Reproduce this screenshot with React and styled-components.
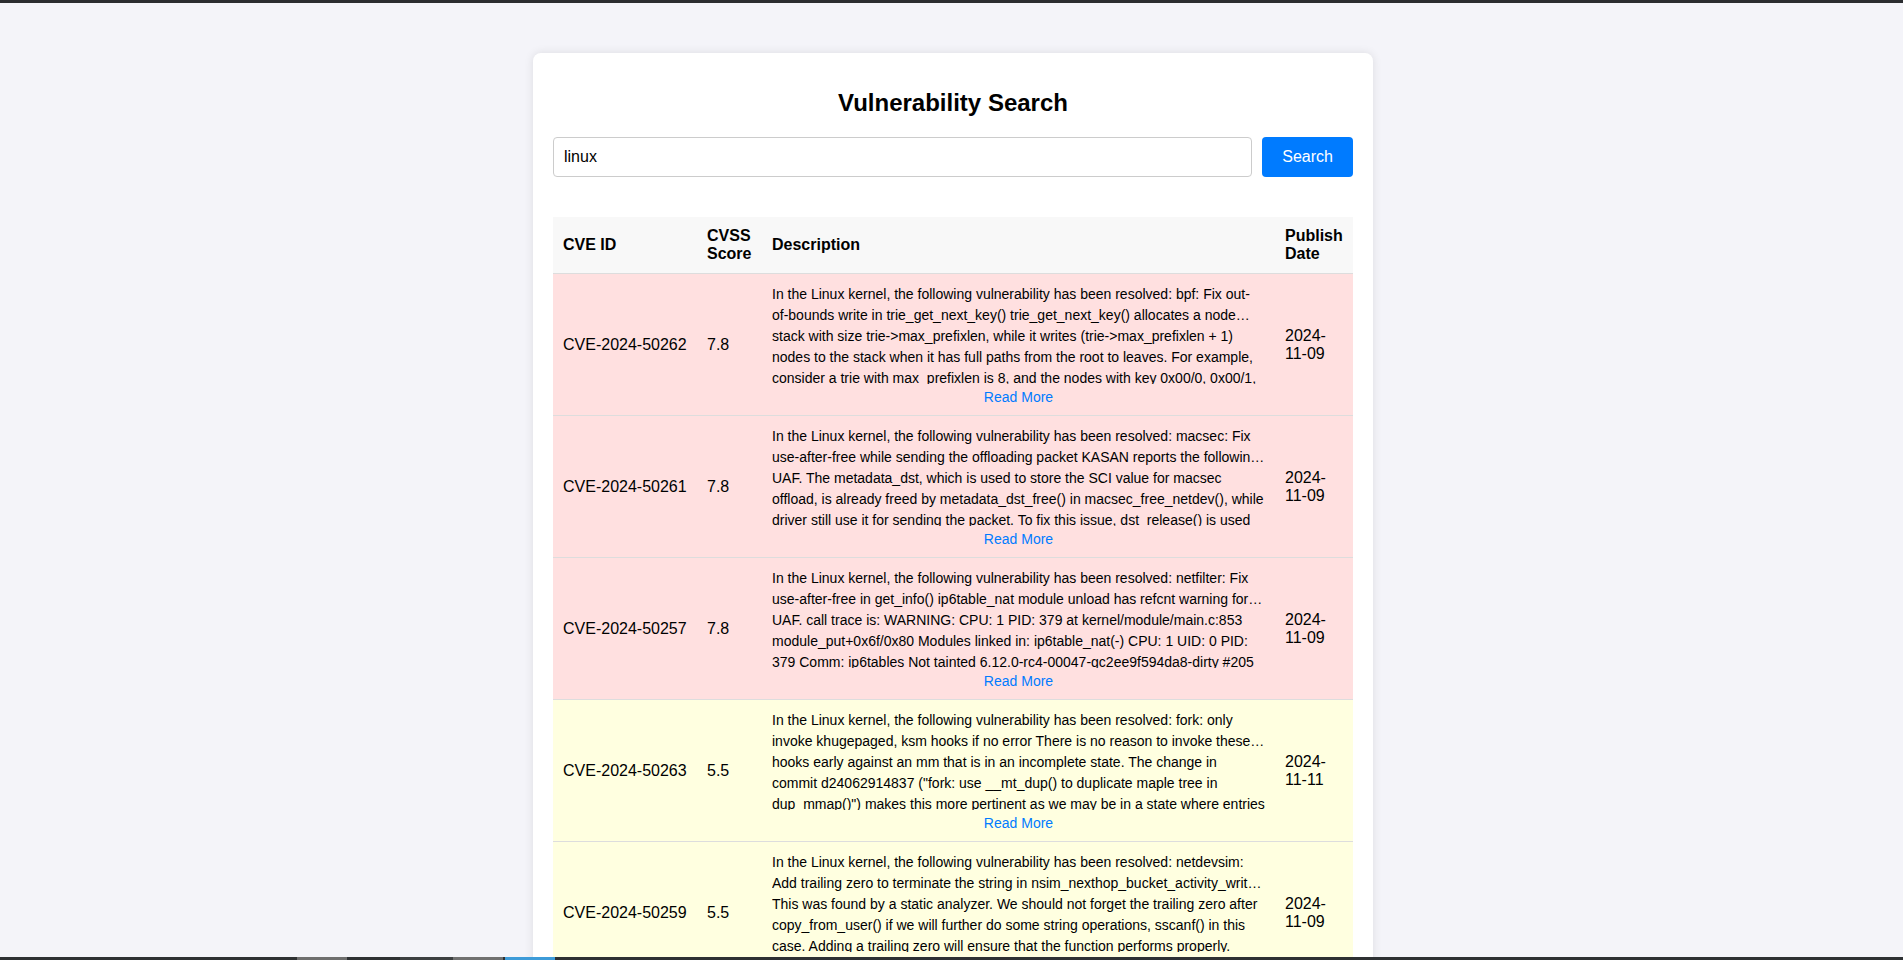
import React, { useState } from "react";
import styled, { createGlobalStyle } from "styled-components";

const GlobalStyle = createGlobalStyle`
  html, body {
    margin: 0;
    padding: 0;
    background: #f4f4f9;
    font-family: "Liberation Sans", Arial, sans-serif;
    color: #000;
    scrollbar-width: none;
  }
  html::-webkit-scrollbar, body::-webkit-scrollbar { display: none; }
`;

const TopBar = styled.div`
  position: fixed;
  top: 0;
  left: 0;
  right: 0;
  height: 3px;
  background: #2b2d30;
  z-index: 10;
`;

const BottomBar = styled.div`
  position: fixed;
  bottom: 0;
  left: 0;
  right: 0;
  height: 3px;
  background: #2e3133;
  display: flex;
  z-index: 10;
`;

const BarSegment = styled.div`
  width: ${(p) => p.$w}px;
  flex: none;
  background: ${(p) => p.$c};
`;

const Page = styled.div`
  padding: 53px 0 40px 3px;
`;

const Card = styled.main`
  width: 840px;
  box-sizing: border-box;
  margin: 0 auto;
  background: #fff;
  padding: 20px;
  border-radius: 8px;
  box-shadow: 0 0 10px rgba(0, 0, 0, 0.1);
`;

const Title = styled.h1`
  font-size: 24px;
  font-weight: bold;
  text-align: center;
  margin: 16px 0 20px;
  line-height: normal;
`;

const SearchRow = styled.form`
  display: flex;
  gap: 10px;
  margin: 0 0 40px;
`;

const SearchInput = styled.input`
  flex: 1;
  padding: 10px;
  font-size: 16px;
  font-family: inherit;
  border: 1px solid #ccc;
  border-radius: 4px;
  outline: none;
  color: #000;
`;

const SearchButton = styled.button`
  padding: 10px 20px;
  background: #007bff;
  color: #fff;
  border: none;
  border-radius: 4px;
  font-size: 16px;
  font-family: inherit;
  cursor: pointer;
`;

const Table = styled.table`
  width: 100%;
  border-collapse: collapse;
  table-layout: fixed;
`;

const Col = styled.col`
  width: ${(p) => (p.$w ? `${p.$w}px` : "auto")};
`;

const Th = styled.th`
  padding: 10px;
  text-align: left;
  background: #f8f8f8;
  border-bottom: 1px solid #ddd;
  font-size: 16px;
  font-weight: bold;
  vertical-align: middle;
`;

const Row = styled.tr`
  background: ${(p) => (p.$severity === "high" ? "#ffe0e0" : "#ffffe0")};
`;

const Td = styled.td`
  padding: 10px;
  border-bottom: 1px solid #ddd;
  font-size: 16px;
  vertical-align: middle;
  white-space: ${(p) => (p.$nowrap ? "nowrap" : "normal")};
`;

const Desc = styled.div`
  font-size: 14px;
  line-height: 21px;
  height: 100px;
  overflow: hidden;
  display: -webkit-box;
  -webkit-line-clamp: 2;
  -webkit-box-orient: vertical;
`;

const ReadMore = styled.button`
  display: block;
  margin: 5px auto 0;
  padding: 0;
  background: none;
  border: none;
  color: #007bff;
  font-size: 14px;
  font-family: inherit;
  line-height: normal;
  cursor: pointer;
`;

const data = [
  {
    id: "CVE-2024-50262",
    score: "7.8",
    date: "2024-11-09",
    desc:
      "In the Linux kernel, the following vulnerability has been resolved: bpf: Fix out-of-bounds write in trie_get_next_key() trie_get_next_key() allocates a node stack with size trie->max_prefixlen, while it writes (trie->max_prefixlen + 1) nodes to the stack when it has full paths from the root to leaves. For example, consider a trie with max_prefixlen is 8, and the nodes with key 0x00/0, 0x00/1, 0x00/2, ... 0x00/8 inserted. Subsequent calls to trie_get_next_key with _key with .prefixlen = 8 make 9 nodes be written on the node stack with size 8.",
  },
  {
    id: "CVE-2024-50261",
    score: "7.8",
    date: "2024-11-09",
    desc:
      "In the Linux kernel, the following vulnerability has been resolved: macsec: Fix use-after-free while sending the offloading packet KASAN reports the following UAF. The metadata_dst, which is used to store the SCI value for macsec offload, is already freed by metadata_dst_free() in macsec_free_netdev(), while driver still use it for sending the packet. To fix this issue, dst_release() is used instead to release metadata_dst. So it is not freed instantly in macsec_free_netdev() if still referenced by skb.",
  },
  {
    id: "CVE-2024-50257",
    score: "7.8",
    date: "2024-11-09",
    desc:
      "In the Linux kernel, the following vulnerability has been resolved: netfilter: Fix use-after-free in get_info() ip6table_nat module unload has refcnt warning for UAF. call trace is: WARNING: CPU: 1 PID: 379 at kernel/module/main.c:853 module_put+0x6f/0x80 Modules linked in: ip6table_nat(-) CPU: 1 UID: 0 PID: 379 Comm: ip6tables Not tainted 6.12.0-rc4-00047-gc2ee9f594da8-dirty #205 RIP: 0010:module_put+0x6f/0x80 Call Trace: <TASK> get_info+0x128/0x180 do_ip6t_get_ctl+0x6a/0x430 nf_getsockopt+0x46/0x80 ipv6_getsockopt+0xb9/0x100",
  },
  {
    id: "CVE-2024-50263",
    score: "5.5",
    date: "2024-11-11",
    desc:
      "In the Linux kernel, the following vulnerability has been resolved: fork: only invoke khugepaged, ksm hooks if no error There is no reason to invoke these hooks early against an mm that is in an incomplete state. The change in commit d24062914837 (\"fork: use __mt_dup() to duplicate maple tree in dup_mmap()\") makes this more pertinent as we may be in a state where entries in the maple tree are not yet consistent. Their placement early in dup_mmap() only appears to have been meaningful for early error checking.",
  },
  {
    id: "CVE-2024-50259",
    score: "5.5",
    date: "2024-11-09",
    desc:
      "In the Linux kernel, the following vulnerability has been resolved: netdevsim: Add trailing zero to terminate the string in nsim_nexthop_bucket_activity_write() This was found by a static analyzer. We should not forget the trailing zero after copy_from_user() if we will further do some string operations, sscanf() in this case. Adding a trailing zero will ensure that the function performs properly.",
  },
];

export default function App() {
  const [query, setQuery] = useState("linux");
  return (
    <>
      <GlobalStyle />
      <TopBar />
      <Page>
        <Card>
          <Title>Vulnerability Search</Title>
          <SearchRow onSubmit={(e) => e.preventDefault()}>
            <SearchInput value={query} onChange={(e) => setQuery(e.target.value)} />
            <SearchButton type="submit">Search</SearchButton>
          </SearchRow>
          <Table>
            <colgroup>
              <Col $w={144} />
              <Col $w={65} />
              <Col />
              <Col $w={78} />
            </colgroup>
            <thead>
              <tr>
                <Th>CVE ID</Th>
                <Th>CVSS Score</Th>
                <Th>Description</Th>
                <Th>Publish Date</Th>
              </tr>
            </thead>
            <tbody>
              {data.map((r) => (
                <Row key={r.id} $severity={parseFloat(r.score) >= 7 ? "high" : "medium"}>
                  <Td $nowrap>{r.id}</Td>
                  <Td>{r.score}</Td>
                  <Td>
                    <Desc>{r.desc}</Desc>
                    <ReadMore type="button">Read More</ReadMore>
                  </Td>
                  <Td>{r.date}</Td>
                </Row>
              ))}
            </tbody>
          </Table>
        </Card>
      </Page>
      <BottomBar>
        <BarSegment $w={297} $c="#2e3133" />
        <BarSegment $w={50} $c="#6e6e6e" />
        <BarSegment $w={53} $c="#2e3133" />
        <BarSegment $w={53} $c="#3c3f41" />
        <BarSegment $w={50} $c="#707070" />
        <BarSegment $w={2} $c="#2e3133" />
        <BarSegment $w={50} $c="#3d9bd8" />
      </BottomBar>
    </>
  );
}
